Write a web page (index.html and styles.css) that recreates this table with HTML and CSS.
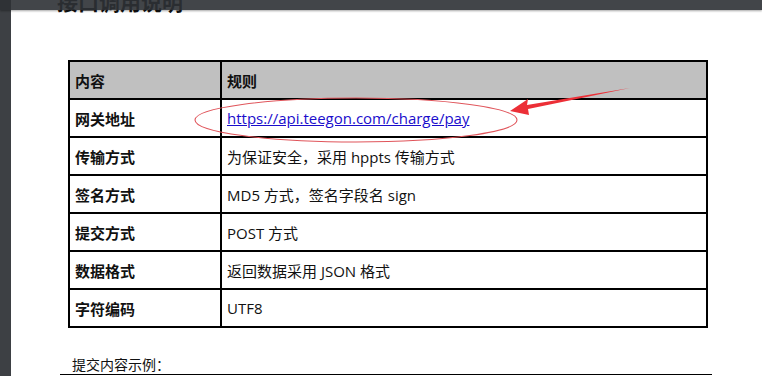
FILE: index.html
```html
<!DOCTYPE html>
<html lang="zh-CN">
<head>
  <meta charset="UTF-8" />
  <meta name="viewport" content="width=device-width, initial-scale=1" />
  <title>接口调用说明</title>
  <link rel="stylesheet" href="styles.css">
</head>
<body>
  <div class="toolbar"></div>

  <div class="viewer">
    <div class="page">
      <h2 class="title">接口调用说明</h2>

      <table class="rules">
        <tr class="head">
          <th class="key">内容</th>
          <th>规则</th>
        </tr>
        <tr>
          <td class="key">网关地址</td>
          <td><a href="#">https://api.teegon.com/charge/pay</a></td>
        </tr>
        <tr>
          <td class="key">传输方式</td>
          <td>为保证安全，采用 hppts 传输方式</td>
        </tr>
        <tr>
          <td class="key">签名方式</td>
          <td>MD5 方式，签名字段名 sign</td>
        </tr>
        <tr>
          <td class="key">提交方式</td>
          <td>POST 方式</td>
        </tr>
        <tr>
          <td class="key">数据格式</td>
          <td>返回数据采用 JSON 格式</td>
        </tr>
        <tr>
          <td class="key">字符编码</td>
          <td>UTF8</td>
        </tr>
      </table>

      <p class="sample">提交内容示例：</p>
      <div class="code"></div>

      <!-- hand-drawn markup: circle round the gateway url and an arrow -->
      <svg class="markup" width="762" height="376" viewBox="0 0 762 376">
        <ellipse cx="356" cy="120" rx="161" ry="22" fill="none" stroke="#e0555b" stroke-width="1.1" />
        <polygon points="510,111 528,99 527,105 630,88 528,109 529,115" fill="#ec2f37" />
      </svg>
    </div>
  </div>
</body>
</html>
```

FILE: styles.css
```css
body {
  margin: 0;
  background: #3d4044;
  font-family: "Open Sans", "Noto Sans CJK SC", sans-serif;
  color: #111;
  height: 376px;
  overflow: hidden;
}
.toolbar {
  position: absolute;
  top: 0;
  left: 0;
  right: 0;
  height: 10px;
  background: rgba(46, 49, 53, 0.9);
  box-shadow: 0 1px 2px rgba(0, 0, 0, 0.35);
  z-index: 2;
}
.viewer {
  padding-left: 11px;
  height: 100%;
}
.page {
  position: relative;
  background: #fff;
  height: 100%;
  padding-left: 57px;
  overflow: hidden;
}
.title {
  margin: 0;
  position: relative;
  top: -10px;
  left: -11px;
  height: 23px;
  font-size: 21px;
  font-weight: bold;
  line-height: 23px;
  font-family: "Noto Sans CJK SC", sans-serif;
}
.rules {
  margin-top: 37px;
  width: 640px;
  border-collapse: collapse;
  border: 2px solid #000;
  font-size: 15px;
}
.rules th, .rules td {
  height: 36px;
  padding: 0 0 0 5px;
  border: 2px solid #000;
  text-align: left;
  vertical-align: middle;
  font-weight: normal;
}
.rules .head th {
  background: #c0c0c0;
  font-weight: bold;
}
.rules .key {
  width: 145px;
  font-weight: bold;
  font-family: "Noto Sans CJK SC", sans-serif;
}
.rules a {
  color: #1a0dcc;
}
.sample {
  margin: 28px 0 0 4px;
  font-size: 14px;
  line-height: 18px;
}
.code {
  margin: 0 0 0 -8px;
  width: 652px;
  border-top: 1px solid #000;
}
.markup {
  position: absolute;
  top: 0;
  left: -11px;
}
```
